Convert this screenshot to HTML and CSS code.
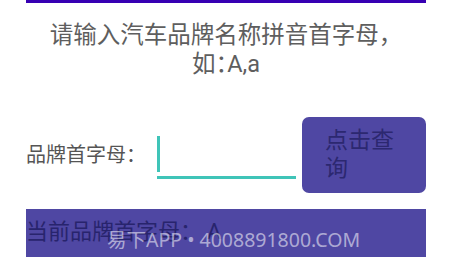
FILE: index.html
```html
<!DOCTYPE html>
<html lang="zh-CN">
<head>
<meta charset="utf-8">
<title>汽车品牌查询</title>
<link rel="stylesheet" href="styles.css">
</head>
<body>
<div class="page">
  <div class="topbar"></div>
  <p class="hint">请输入汽车品牌名称拼音首字母，<br>如<span class="half">：</span>A,a</p>
  <div class="row">
    <label class="label">品牌首字母<span class="half">：</span></label>
    <div class="field"><span class="caret"></span></div>
    <button class="btn">点击查询</button>
  </div>
  <div class="status">当前品牌首字母：<span class="letter">A</span></div>
</div>
<div class="watermark">易下APP • 4008891800.COM</div>
</body>
</html>
```
FILE: styles.css
```css
html, body {
  margin: 0;
  padding: 0;
  background: #ffffff;
}
body {
  position: relative;
  width: 466px;
  height: 264px;
  overflow: hidden;
  font-family: Roboto, "Noto Sans CJK SC", sans-serif;
}
.page {
  width: 400px;
  margin: 0 26px;
}
.topbar {
  height: 3px;
  background: #3700b3;
}
.hint {
  margin: 18px 0 0;
  font-size: 23.5px;
  line-height: 29px;
  text-align: center;
  color: #5e5e5e;
}
.half {
  font-feature-settings: "halt";
}
.row {
  margin-top: 38px;
  display: flex;
  align-items: center;
}
.label {
  width: 131px;
  flex: none;
  font-size: 20px;
  line-height: 24px;
  color: #555555;
}
.field {
  width: 139px;
  flex: none;
  margin-top: 5px;
  display: flex;
  flex-direction: column;
  border-bottom: 3px solid #3fc4b8;
}
.caret {
  display: block;
  width: 2.5px;
  height: 36px;
  margin-bottom: 4px;
  background: #3fc4b8;
}
.btn {
  width: 124px;
  height: 76px;
  flex: none;
  margin-left: 6px;
  padding: 0 23px;
  border: none;
  border-radius: 7px;
  background: #4f47a3;
  color: #2c2870;
  font-family: Roboto, "Noto Sans CJK SC", sans-serif;
  font-size: 23px;
  line-height: 28px;
  text-align: left;
}
.status {
  margin-top: 16px;
  height: 48px;
  box-sizing: border-box;
  padding-top: 9px;
  background: #4f47a3;
  color: #28246d;
  font-size: 22px;
  line-height: 28px;
}
.letter {
  margin-left: 5px;
}
.watermark {
  position: absolute;
  left: 107px;
  top: 228px;
  font-family: "Noto Sans", "Noto Sans CJK SC", sans-serif;
  font-size: 19.5px;
  line-height: 24px;
  color: rgba(255, 255, 255, 0.55);
  white-space: nowrap;
}
```
